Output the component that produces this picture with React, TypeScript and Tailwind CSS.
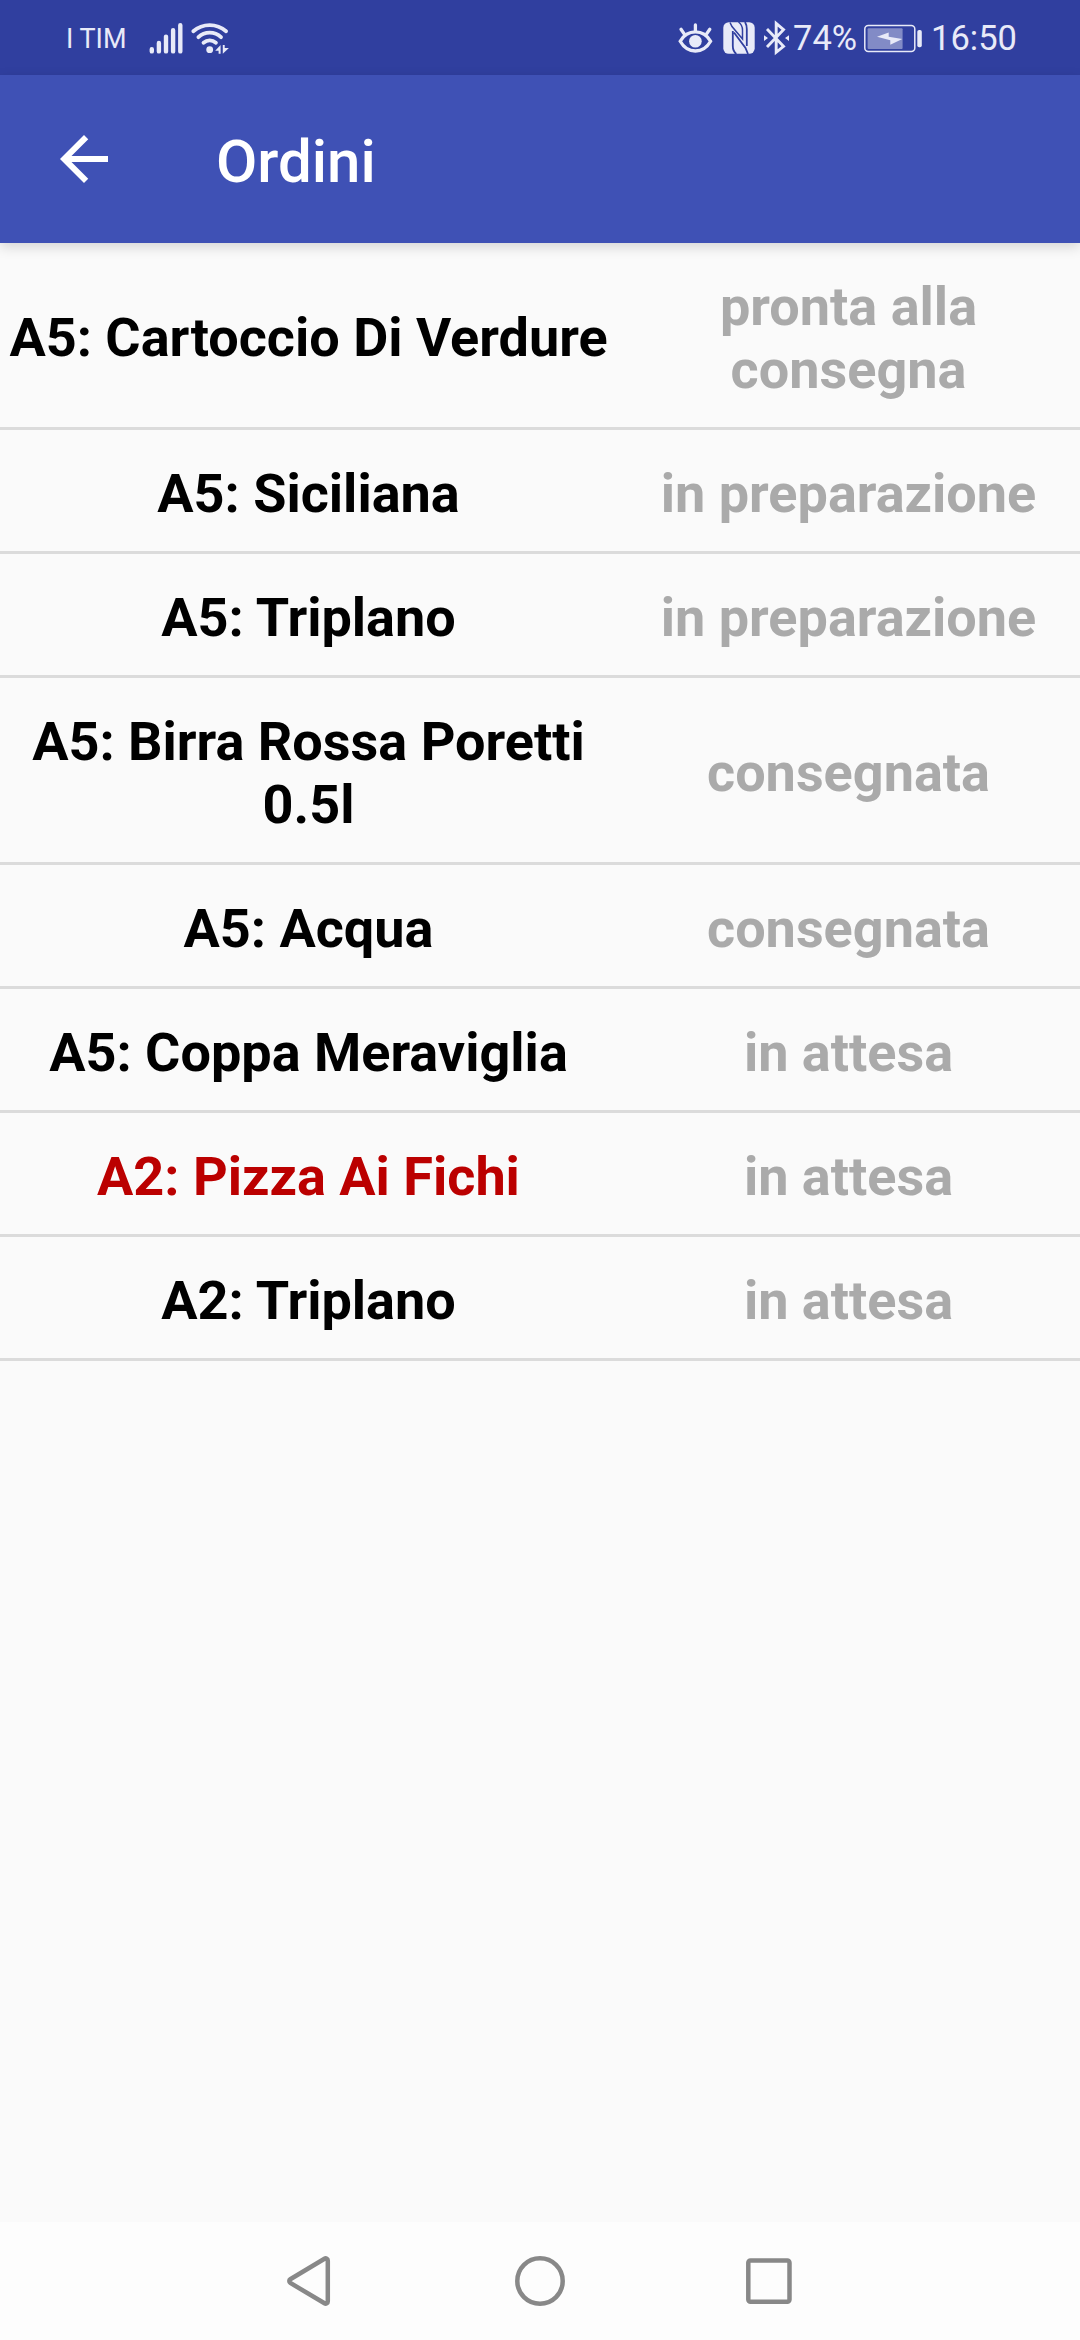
import React from "react";

type Order = {
	id: number;
	name: string;
	status: string;
	highlighted?: boolean;
};

const ORDERS: Order[] = [
	{ id: 1, name: "A5: Cartoccio Di Verdure", status: "pronta alla consegna" },
	{ id: 2, name: "A5: Siciliana", status: "in preparazione" },
	{ id: 3, name: "A5: Triplano", status: "in preparazione" },
	{ id: 4, name: "A5: Birra Rossa Poretti 0.5l", status: "consegnata" },
	{ id: 5, name: "A5: Acqua", status: "consegnata" },
	{ id: 6, name: "A5: Coppa Meraviglia", status: "in attesa" },
	{ id: 7, name: "A2: Pizza Ai Fichi", status: "in attesa", highlighted: true },
	{ id: 8, name: "A2: Triplano", status: "in attesa" },
];

const SignalIcon = () => (
	<svg
		className="w-[36px] h-[36px] shrink-0"
		viewBox="148 19 36 36"
		stroke="currentColor"
		strokeWidth="4.4"
		strokeLinecap="round"
	>
		<path d="M151.8 48.2v2.2M158.9 42v8.4M166 35.6v14.8M173.1 29.3v21.1M180.3 24.2v26.2" />
	</svg>
);

const WifiIcon = () => (
	<svg
		className="w-[40px] h-[36px] shrink-0 ml-1.5"
		viewBox="190 19 40 36"
		fill="none"
		stroke="currentColor"
		strokeWidth="3.8"
		strokeLinecap="round"
	>
		<path d="M193.3 30.3a25 25 0 0 1 32.8 0M198.4 36.2a16.4 16.4 0 0 1 22.6 0M203.5 41.7a9.9 9.9 0 0 1 12.4 0" />
		<circle cx="209.7" cy="48.7" r="3.4" fill="currentColor" stroke="none" />
		<path
			d="M220.6 44v8.8h-2v-3h-3.4zM222.8 44h1.9v3h4.2l-6.1 5.8z"
			fill="currentColor"
			stroke="none"
		/>
	</svg>
);

const EyeIcon = () => (
	<svg
		className="w-[38px] h-[36px] shrink-0"
		viewBox="676 19 38 36"
		fill="none"
		stroke="currentColor"
		strokeWidth="3.3"
		strokeLinecap="round"
	>
		<path d="M679.2 40.3c3.4-6 9-9.4 15.2-9.4s11.800 3.400 15.200 9.400c-3.400 6-9 9.700-15.200 9.700s-11.800-3.700-15.200-9.700z" />
		<path d="M694.4 24v5.500M680 28.300l3.200 4.600M708.800 28.300l-3.200 4.600" />
		<circle cx="694.4" cy="40.2" r="6.3" fill="currentColor" stroke="none" />
	</svg>
);

const NfcIcon = () => (
	<svg className="w-[34px] h-[36px] shrink-0 ml-[7px]" viewBox="721 19 34 36" fill="none">
		<rect x="722.3" y="21.2" width="31.4" height="31.6" rx="5.5" fill="currentColor" />
		<path
			d="M729 21.500l2 4 10.500 12.500V29q0-5-4-8"
			stroke="#303f9f"
			strokeWidth="1.500"
		/>
		<path
			d="M731.800 30v15q0 5 3.500 8M733 31.500l11.500 15.500 2.500 6M744 21q1.800 3 1.800 7v17"
			stroke="#303f9f"
			strokeWidth="1.800"
		/>
	</svg>
);

const BluetoothIcon = () => (
	<svg className="w-[28px] h-[36px] shrink-0 ml-[7px]" viewBox="762 19 28 36" fill="none">
		<path
			d="M766 28l16.500 17.300-7.300 6V22.500l7.300 6.200L766 46"
			stroke="currentColor"
			strokeWidth="2.900"
		/>
		<path d="M763 34.200l4 2.900-4 2.900zM788 34.200l-4 2.900 4 2.900z" fill="currentColor" />
	</svg>
);

const BatteryIcon = () => (
	<svg className="w-[60px] h-[36px] shrink-0" viewBox="863 19 60 36" fill="none">
		<rect
			x="864.8"
			y="24.6"
			width="50"
			height="26"
			rx="3.5"
			stroke="currentColor"
			strokeWidth="1.5"
		/>
		<rect x="867.6" y="27.3" width="35" height="20.6" rx="1" fill="#828bc6" />
		<path d="M877 35.700l11.700-4.200v4.200l13.600 2.400-12 5.700v-4.500z" fill="currentColor" />
		<rect x="917.3" y="29" width="4.5" height="17.3" rx="1.8" fill="currentColor" />
	</svg>
);

const StatusBar = () => (
	<div className="flex h-[75px] items-center justify-between bg-[#303f9f] px-[65px] text-[#e8eaf8]">
		<div className="flex items-center">
			<span className="mt-[3px] w-[83px] pl-px text-[27px] leading-8">I TIM</span>
			<SignalIcon />
			<WifiIcon />
		</div>
		<div className="flex items-center">
			<EyeIcon />
			<NfcIcon />
			<BluetoothIcon />
			<span className="mt-px w-[72px] pl-0.5 text-[34.5px] leading-10">74%</span>
			<BatteryIcon />
			<span className="mt-px w-[92px] pl-2 text-[34.5px] leading-10">16:50</span>
		</div>
	</div>
);

const AppBar = () => (
	<header className="relative z-[1] flex h-[168px] items-center bg-[#3f51b5] pl-12 text-white shadow-[0_4px_12px_rgba(0,0,0,0.15)]">
		<button className="mr-24" aria-label="Indietro">
			<svg className="size-[72px]" viewBox="0 0 24 24" fill="currentColor">
				<path d="M20 11H7.830l5.590-5.590L12 4l-8 8 8 8 1.410-1.410L7.830 13H20z" />
			</svg>
		</button>
		<h1 className="mt-[5px] text-[60px] font-medium leading-[70px]">Ordini</h1>
	</header>
);

const OrderRow = ({ name, status, highlighted }: Order) => (
	<li className="flex items-center border-b-[3px] border-[#dbdbdb] pt-[31.9px] pb-[26.1px] text-center text-[54px] font-bold leading-[63px]">
		<span className={`w-[617px] px-2 ${highlighted ? "text-[#bb0000]" : "text-black"}`}>
			{name}
		</span>
		<span className="w-[463px] text-[#aaaaaa]">{status}</span>
	</li>
);

const NavigationBar = () => (
	<nav className="flex h-[118px] items-center justify-center bg-[#fdfdfd] text-[#888888]">
		<div className="flex w-[230px] justify-center">
			<svg className="size-[60px]" viewBox="0 0 60 60" fill="none" stroke="currentColor" strokeWidth="4.5">
				<path d="M44.500 7.700 10.300 28.200a2.200 2.200 0 0 0 0 3.700L44.500 52.300a2.200 2.200 0 0 0 3.300-1.900V9.600a2.200 2.200 0 0 0-3.300-1.900z" />
			</svg>
		</div>
		<div className="flex w-[230px] justify-center">
			<svg className="size-[60px]" viewBox="0 0 60 60" fill="none" stroke="currentColor" strokeWidth="4.5">
				<circle cx="30" cy="30" r="22.7" />
			</svg>
		</div>
		<div className="flex w-[230px] justify-center">
			<svg className="size-[60px]" viewBox="0 0 60 60" fill="none" stroke="currentColor" strokeWidth="4.5">
				<rect x="8.3" y="9.5" width="41.2" height="41.2" rx="2.2" />
			</svg>
		</div>
	</nav>
);

const App = () => {
	return (
		<div className="flex h-[2340px] w-[1080px] flex-col overflow-hidden bg-[#fafafa] font-[Roboto,sans-serif]">
			<StatusBar />
			<AppBar />
			<ul className="flex-1">
				{ORDERS.map((order) => (
					<OrderRow key={order.id} {...order} />
				))}
			</ul>
			<NavigationBar />
		</div>
	);
};

export default App;
